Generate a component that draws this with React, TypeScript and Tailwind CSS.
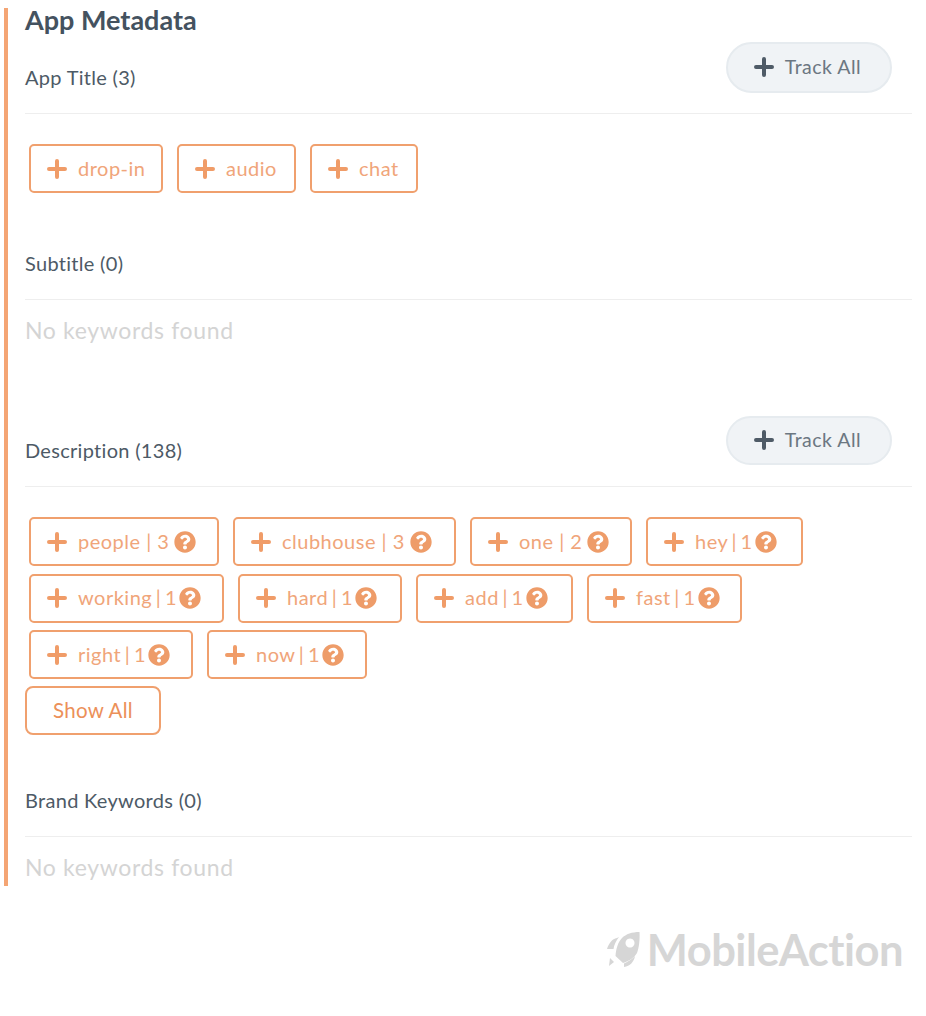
import { FaQuestionCircle } from "react-icons/fa";

interface Keyword {
  label: string;
  count?: number;
  width: string;
}

const titleKeywords: Keyword[] = [
  { label: "drop-in", width: "w-[134px]" },
  { label: "audio", width: "w-[119px]" },
  { label: "chat", width: "w-[108px]" },
];

const descriptionKeywords: Keyword[] = [
  { label: "people", count: 3, width: "w-[190px]" },
  { label: "clubhouse", count: 3, width: "w-[223px]" },
  { label: "one", count: 2, width: "w-[162px]" },
  { label: "hey", count: 1, width: "w-[157px]" },
  { label: "working", count: 1, width: "w-[195px]" },
  { label: "hard", count: 1, width: "w-[164px]" },
  { label: "add", count: 1, width: "w-[157px]" },
  { label: "fast", count: 1, width: "w-[155px]" },
  { label: "right", count: 1, width: "w-[164px]" },
  { label: "now", count: 1, width: "w-[160px]" },
];

function PlusIcon({ className }: { className?: string }) {
  return (
    <svg viewBox="0 0 20 20" className={className} fill="none" stroke="currentColor" strokeWidth="4" strokeLinecap="round">
      <path d="M10 2v16M2 10h16" />
    </svg>
  );
}

function TrackAll({ className }: { className?: string }) {
  return (
    <button className={`flex w-[166px] items-center justify-center gap-[11px] rounded-full border-2 border-[#e6ebef] bg-[#f0f3f6] pb-[2px] pr-[3px] text-[19.5px] tracking-[0.5px] text-[#6c7782] ${className}`}>
      <PlusIcon className="h-[20px] w-[20px] text-[#4f5b67]" />
      Track All
    </button>
  );
}

function KeywordChip({ keyword }: { keyword: Keyword }) {
  const hasCount = keyword.count !== undefined;
  const single = keyword.count === 1;
  return (
    <div className={`flex h-[49px] items-center rounded-[5px] border-2 border-[#f0a06e] pl-[16px] text-[20px] tracking-[0.5px] text-[#f0a57a] ${keyword.width}`}>
      <PlusIcon className="h-[20px] w-[20px] shrink-0 text-[#f09c68]" />
      <span className={`-mt-[2px] ml-[11px] whitespace-nowrap ${single ? "[word-spacing:-2px]" : ""}`}>
        {hasCount ? `${keyword.label} | ${keyword.count}` : keyword.label}
      </span>
      {hasCount && <FaQuestionCircle className={`shrink-0 text-[22px] text-[#ee9c69] ${single ? "ml-[2px]" : "ml-[5px]"}`} />}
    </div>
  );
}

function SectionHeader({ title, action }: { title: string; action?: React.ReactNode }) {
  return (
    <div className="relative flex h-[50px] items-end border-b border-[#eeeeee] pb-[24px]">
      <span className="text-[20px] leading-[24px] tracking-[0.3px] text-[#4d5a66]">{title}</span>
      {action}
    </div>
  );
}

function NoKeywords() {
  return <p className="mt-[15px] text-[23px] leading-[30px] tracking-[0.65px] text-[#d4d4d4]">No keywords found</p>;
}

export default function App() {
  return (
    <div className="h-[1016px] w-[926px] bg-white pl-[4px] pt-[8px] font-['Lato',sans-serif]">
      <div className="flow-root h-[878px] w-[908px] border-l-4 border-[#f4a574] pl-[17px]">
        <h2 className="-mt-[6px] h-[62px] text-[27px] leading-[36px] font-bold text-[#44525f]">App Metadata</h2>

        {/* App Title */}
        <SectionHeader
          title="App Title (3)"
          action={
            <div className="absolute -top-[22px] right-[20px]">
              <TrackAll className="h-[51px]" />
            </div>
          }
        />
        <div className="flex gap-[14px] pl-[4px] pt-[30px]">
          {titleKeywords.map((k) => (
            <KeywordChip key={k.label} keyword={k} />
          ))}
        </div>

        {/* Subtitle */}
        <div className="mt-[57px]">
          <SectionHeader title="Subtitle (0)" />
          <NoKeywords />
        </div>

        {/* Description */}
        <div className="mt-[92px]">
          <SectionHeader
            title="Description (138)"
            action={
              <div className="absolute -top-[21px] right-[20px]">
                <TrackAll className="h-[49px]" />
              </div>
            }
          />
          <div className="flex w-[800px] flex-wrap gap-x-[14px] gap-y-[7.5px] pl-[4px] pt-[30px]">
            {descriptionKeywords.map((k) => (
              <KeywordChip key={k.label} keyword={k} />
            ))}
          </div>
          <button className="mt-[7px] h-[49px] w-[136px] rounded-[8px] border-2 border-[#f0a06e] text-[20.5px] tracking-[0.3px] text-[#ec9059]">Show All</button>
        </div>

        {/* Brand Keywords */}
        <div className="mt-[52px]">
          <SectionHeader title="Brand Keywords (0)" />
          <NoKeywords />
        </div>
      </div>

      {/* Logo */}
      <div className="mt-[41px] flex w-[899px] items-center justify-end gap-[4px]">
        <svg viewBox="6 6 36 36" className="h-[36px] w-[36px] text-[#d6d6d6]" fill="currentColor">
          <path
            fillRule="evenodd"
            d="M38.5 7C31 7 25 9 21 13C17 17 15 24 14.5 31L22 38C28 36 33 33 36 28C38 23 39 15 38.5 7ZM29 13.5a4.5 4.5 0 1 0 .01 0Z"
          />
          <path d="M16 13C11 14 8 18 6 24L12.5 24C13 20 15 16 18 12ZM34 31C33 37 29 41 23 42L23 38.5C27 37 31 34 34 31ZM9 33L13 37L8 41Z" />
        </svg>
        <span className="text-[43.5px] leading-[44px] font-bold tracking-[-0.5px] text-[#d6d6d6]">MobileAction</span>
      </div>
    </div>
  );
}
